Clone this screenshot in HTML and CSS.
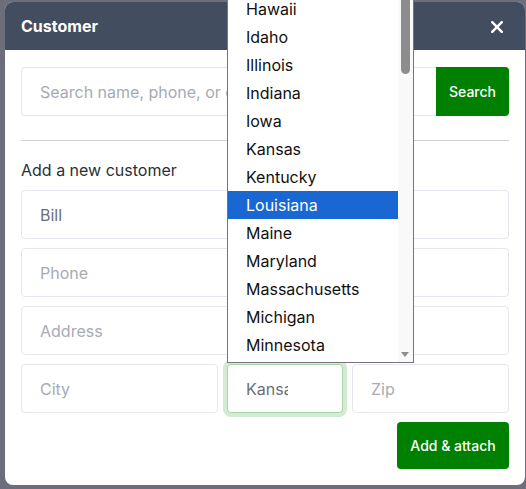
FILE: index.html
```html
<!DOCTYPE html>
<html lang="en">
<head>
<meta charset="utf-8">
<title>Customer</title>
<link rel="stylesheet" href="styles.css">
</head>
<body>
<div class="backdrop">
  <div class="modal">
    <div class="modal-header">
      <span class="modal-title">Customer</span>
      <button class="close" aria-label="Close">
        <svg width="12" height="12" viewBox="0 0 12 12"><path d="M1.2 1.2 L10.8 10.8 M10.8 1.2 L1.2 10.8" stroke="#fff" stroke-width="2.4" stroke-linecap="round"/></svg>
      </button>
    </div>
    <div class="modal-body">
      <div class="search-row">
        <div class="field placeholder">Search name, phone, or email</div>
        <button class="btn">Search</button>
      </div>
      <div class="divider"></div>
      <div class="section-label">Add a new customer</div>
      <div class="form">
        <div class="field value">Bill</div>
        <div class="field placeholder">Phone</div>
        <div class="field placeholder">Address</div>
        <div class="addr-row">
          <div class="field placeholder">City</div>
          <div class="state-wrap">
            <div class="field value state"><span class="state-text">Kansas</span></div>
            <div class="listbox">
              <div class="options">
                <div class="option">Georgia</div>
                <div class="option">Hawaii</div>
                <div class="option">Idaho</div>
                <div class="option">Illinois</div>
                <div class="option">Indiana</div>
                <div class="option">Iowa</div>
                <div class="option">Kansas</div>
                <div class="option">Kentucky</div>
                <div class="option selected">Louisiana</div>
                <div class="option">Maine</div>
                <div class="option">Maryland</div>
                <div class="option">Massachusetts</div>
                <div class="option">Michigan</div>
                <div class="option">Minnesota</div>
              </div>
              <div class="scrollbar">
                <div class="thumb"></div>
                <div class="arrow"></div>
              </div>
            </div>
          </div>
          <div class="field placeholder">Zip</div>
        </div>
      </div>
      <div class="actions">
        <button class="btn btn-lg">Add &amp; attach</button>
      </div>
    </div>
  </div>
</div>
</body>
</html>
```
FILE: styles.css
```css
* { box-sizing: border-box; }
html, body {
  margin: 0;
  height: 100%;
  overflow: hidden;
}
body {
  background: #6c6f79;
  font-family: Inter, "Noto Sans", sans-serif;
}
.backdrop {
  padding: 2px 1px 0 5px;
}
.modal {
  width: 520px;
  background: #fff;
  border-radius: 8px;
  overflow: visible;
}
.modal-header {
  height: 48px;
  background: #434d60;
  border-radius: 8px 8px 0 0;
  display: flex;
  align-items: center;
  justify-content: space-between;
  padding: 0 22px 0 16px;
}
.modal-title {
  color: #fff;
  font-weight: 700;
  font-size: 16px;
}
.close {
  background: none;
  border: 0;
  padding: 0;
  width: 12px;
  height: 12px;
  display: flex;
  margin-top: 2px;
}
.modal-body {
  padding: 17px 16px 16px 16px;
}
.search-row {
  display: flex;
}
.search-row .field {
  flex: 1;
  border-right: 0;
  border-radius: 4px 0 0 4px;
}
.search-row .btn {
  border-radius: 0 4px 4px 0;
}
.field {
  height: 49px;
  border: 1px solid #e6e7ee;
  border-radius: 4px;
  padding: 0 18px;
  display: flex;
  align-items: center;
  font-size: 16px;
  white-space: nowrap;
  overflow: hidden;
  background: #fff;
}
.placeholder { color: #a6abb4; }
.value { color: #6b6f78; }
.btn {
  background: #008000;
  color: #fff;
  border: 0;
  border-radius: 4px;
  font-family: Inter, "Noto Sans", sans-serif;
  font-size: 14px;
  font-weight: 500;
  height: 49px;
  width: 73px;
  padding: 0;
}
.btn-lg {
  width: 112px;
  height: 47px;
}
.divider {
  height: 1px;
  background: #cfcfd3;
  margin-top: 24px;
}
.section-label {
  margin-top: 19px;
  height: 20px;
  line-height: 20px;
  font-size: 16px;
  color: #2b2f36;
}
.form {
  margin-top: 10px;
  display: flex;
  flex-direction: column;
  gap: 9px;
}
.addr-row {
  display: grid;
  grid-template-columns: 197px 116px 1fr;
  gap: 9px;
}
.state-wrap {
  position: relative;
}
.state {
  border-color: #a9d6a9;
  box-shadow: 0 0 0 4px #d3ead3;
  overflow: visible;
}
.state-text {
  display: block;
  width: 42px;
  overflow: hidden;
  white-space: nowrap;
}
.listbox {
  position: absolute;
  left: 0;
  bottom: calc(100% + 1px);
  width: 187px;
  height: 398px;
  border: 1px solid #767676;
  background: #fff;
  display: flex;
  z-index: 5;
}
.options {
  flex: 1;
  display: flex;
  flex-direction: column;
  justify-content: flex-end;
  padding-bottom: 3px;
  overflow: hidden;
}
.option {
  height: 28px;
  line-height: 28px;
  flex-shrink: 0;
  padding-left: 18px;
  font-size: 16px;
  color: #111;
}
.option.selected {
  background: #1967d2;
  color: #fff;
}
.scrollbar {
  width: 15px;
  background: #f9f9f9;
  position: relative;
}
.thumb {
  position: absolute;
  left: 3px;
  top: 20px;
  width: 9px;
  height: 88px;
  border-radius: 5px;
  background: #8d8d8d;
}
.arrow {
  position: absolute;
  left: 3px;
  bottom: 5px;
  width: 0;
  height: 0;
  border-left: 4.5px solid transparent;
  border-right: 4.5px solid transparent;
  border-top: 5px solid #8d8d8d;
}
.actions {
  display: flex;
  justify-content: flex-end;
  margin-top: 9px;
}
```
